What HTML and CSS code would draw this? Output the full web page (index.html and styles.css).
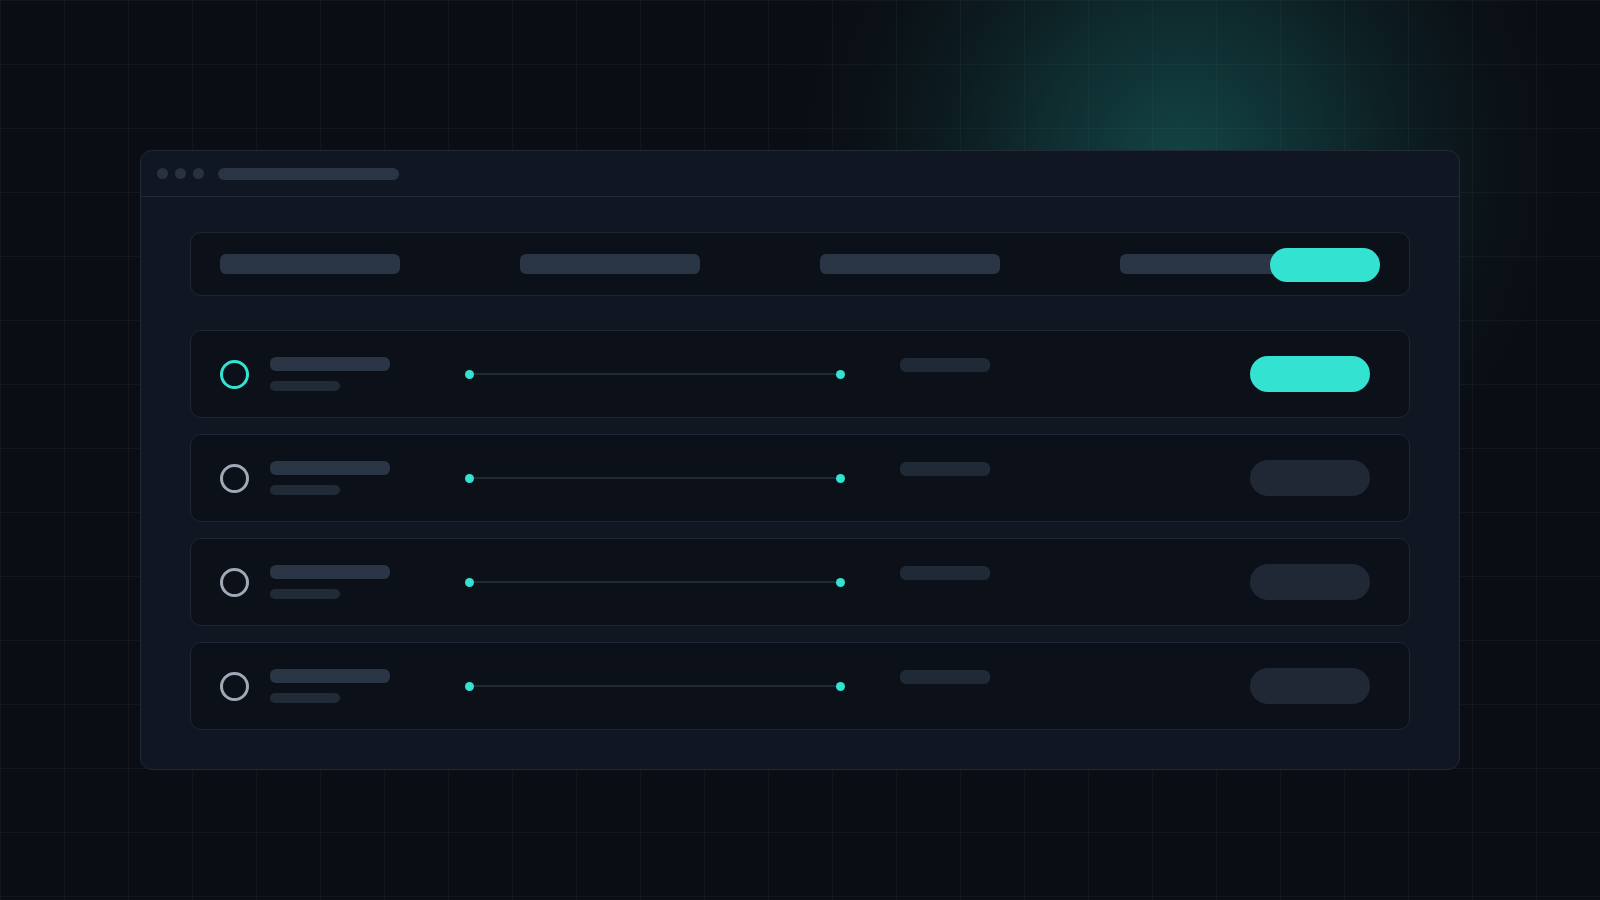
FILE: index.html
```html
<!DOCTYPE html>
<html lang="en">
<head>
<meta charset="utf-8">
<title>Dashboard</title>
<link rel="stylesheet" href="styles.css">
</head>
<body>
<div class="stage">
  <div class="window">
    <div class="titlebar">
      <span class="dot"></span><span class="dot"></span><span class="dot"></span>
      <span class="address"></span>
    </div>
    <div class="content">
      <div class="header-card">
        <span class="hbar"></span>
        <span class="hbar"></span>
        <span class="hbar"></span>
        <span class="hbar"></span>
        <span class="hpill"></span>
      </div>
      <div class="rows">
        <div class="row active">
          <span class="ring"></span>
          <div class="texts"><span class="t1"></span><span class="t2"></span></div>
          <div class="track"><span class="tdot"></span><span class="tline"></span><span class="tdot"></span></div>
          <span class="stat"></span>
          <span class="pill"></span>
        </div>
        <div class="row">
          <span class="ring"></span>
          <div class="texts"><span class="t1"></span><span class="t2"></span></div>
          <div class="track"><span class="tdot"></span><span class="tline"></span><span class="tdot"></span></div>
          <span class="stat"></span>
          <span class="pill"></span>
        </div>
        <div class="row">
          <span class="ring"></span>
          <div class="texts"><span class="t1"></span><span class="t2"></span></div>
          <div class="track"><span class="tdot"></span><span class="tline"></span><span class="tdot"></span></div>
          <span class="stat"></span>
          <span class="pill"></span>
        </div>
        <div class="row">
          <span class="ring"></span>
          <div class="texts"><span class="t1"></span><span class="t2"></span></div>
          <div class="track"><span class="tdot"></span><span class="tline"></span><span class="tdot"></span></div>
          <span class="stat"></span>
          <span class="pill"></span>
        </div>
      </div>
    </div>
  </div>
</div>
</body>
</html>
```
FILE: styles.css
```css
* { box-sizing: border-box; }
html, body {
  margin: 0;
  padding: 0;
  width: 1600px;
  height: 900px;
  overflow: hidden;
  font-family: "Inter", "Liberation Sans", sans-serif;
}
body {
  background-color: #0a0d13;
  background-image:
    radial-gradient(circle at 1182px 160px, rgba(32, 150, 140, 0.40) 0px, rgba(28, 128, 122, 0.30) 120px, rgba(22, 100, 96, 0.18) 230px, rgba(16, 70, 70, 0.08) 320px, rgba(10, 13, 19, 0) 410px),
    linear-gradient(to right, rgba(255,255,255,0.035) 1px, transparent 1px),
    linear-gradient(to bottom, rgba(255,255,255,0.035) 1px, transparent 1px);
  background-size: 100% 100%, 64px 64px, 64px 64px;
}
.stage {
  padding-top: 150px;
  padding-left: 140px;
}
.window {
  width: 1320px;
  height: 620px;
  background: #111722;
  border: 1px solid #212a37;
  border-radius: 12px;
}
.titlebar {
  height: 46px;
  border-bottom: 1px solid #212a37;
  display: flex;
  align-items: center;
  padding-left: 16px;
  gap: 7px;
}
.dot {
  width: 11px;
  height: 11px;
  border-radius: 50%;
  background: #273140;
}
.address {
  margin-left: 7px;
  width: 181px;
  height: 12px;
  border-radius: 6px;
  background: #293545;
}
.content {
  padding: 35px 49px 0 49px;
}
.header-card {
  position: relative;
  height: 64px;
  background: #0c1119;
  border: 1px solid #1e2633;
  border-radius: 11px;
  display: flex;
  align-items: center;
  padding-left: 29px;
  gap: 120px;
}
.hbar {
  width: 180px;
  height: 20px;
  border-radius: 6px;
  background: #2a3646;
}
.hpill {
  position: absolute;
  right: 29px;
  top: 15px;
  width: 110px;
  height: 34px;
  border-radius: 17px;
  background: #33e2d0;
}
.rows {
  margin-top: 34px;
  display: flex;
  flex-direction: column;
  gap: 16px;
}
.row {
  height: 88px;
  background: #0c1119;
  border: 1px solid #1e2633;
  border-radius: 11px;
  display: flex;
  align-items: center;
  padding: 0 39px 0 29px;
}
.ring {
  width: 29px;
  height: 29px;
  border-radius: 50%;
  border: 3px solid #a1a9b6;
  flex: none;
}
.row.active .ring { border-color: #33e2d0; }
.texts {
  margin-left: 21px;
  display: flex;
  flex-direction: column;
  gap: 10px;
  width: 120px;
  flex: none;
}
.t1 {
  width: 120px;
  height: 14px;
  border-radius: 6px;
  background: #2a3646;
}
.t2 {
  width: 70px;
  height: 10px;
  border-radius: 5px;
  background: #212b38;
}
.track {
  margin-left: 75px;
  width: 380px;
  display: flex;
  align-items: center;
  flex: none;
}
.tdot {
  width: 9px;
  height: 9px;
  border-radius: 50%;
  background: #33e2d0;
  flex: none;
}
.tline {
  flex: 1;
  height: 2px;
  background: #1f2a34;
}
.stat {
  margin-left: 55px;
  align-self: flex-start;
  margin-top: 27px;
  width: 90px;
  height: 14px;
  border-radius: 6px;
  background: #202a37;
  flex: none;
}
.pill {
  margin-left: auto;
  width: 120px;
  height: 36px;
  border-radius: 18px;
  background: #1f2834;
  flex: none;
}
.row.active .pill { background: #33e2d0; }
```
